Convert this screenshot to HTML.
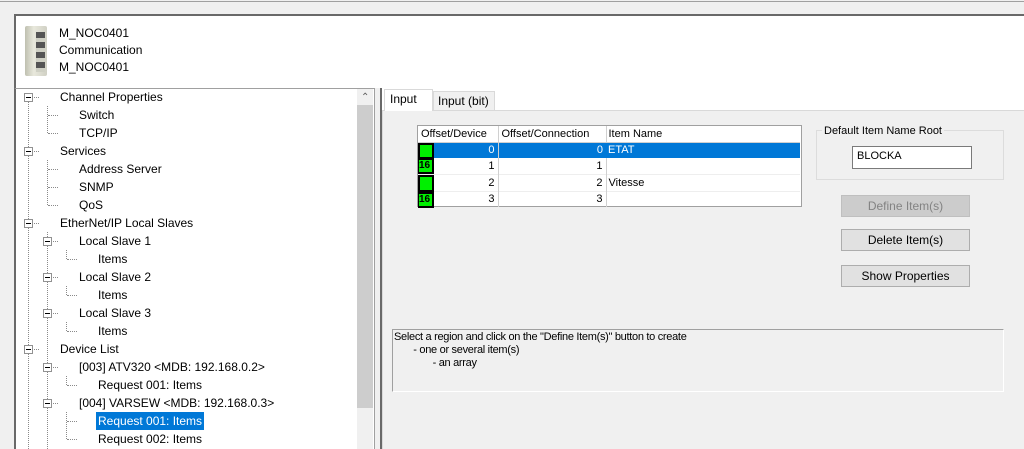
<!DOCTYPE html>
<html><head><style>
*{margin:0;padding:0;box-sizing:border-box}
body{width:1024px;height:449px;overflow:hidden;background:#f0f0f0;font-family:"Liberation Sans",sans-serif;font-size:12px;color:#000;position:relative}
.a{position:absolute}
.t{position:absolute;white-space:nowrap;line-height:18px;font-size:12px}
.box{position:absolute;width:9px;height:9px;border:1px solid #919191;background:#fff}
.box:after{content:"";position:absolute;left:1px;top:3px;width:5px;height:1px;background:#000}
.vd{position:absolute;width:1px;border-left:1px dotted #8a8a8a}
.hd{position:absolute;height:1px;border-top:1px dotted #8a8a8a}
table{border-collapse:collapse}
.btn{position:absolute;width:129px;height:22px;background:#e1e1e1;border:1px solid #adadad;text-align:center;line-height:20px;font-size:12px}
</style></head><body>
<div class="a" style="left:0;top:1px;width:1024px;height:1px;background:#a0a0a0"></div>
<div class="a" style="left:14px;top:14px;width:1010px;height:74px;background:#fff;border-top:2px solid #696969;border-left:2px solid #696969"></div>
<!-- module icon -->
<div class="a" style="left:25px;top:26px;width:22px;height:50px;background:linear-gradient(90deg,#bfc0b0,#e8e8dc 40%,#d0d0c4);border-radius:2px"></div>
<div class="a" style="left:36px;top:32px;width:9px;height:40px;background:repeating-linear-gradient(#555 0 6px,#cfd0c4 6px 10px)"></div>
<div class="t" style="left:59px;top:24px">M_NOC0401</div>
<div class="t" style="left:59px;top:41px">Communication</div>
<div class="t" style="left:59px;top:58px">M_NOC0401</div>
<!-- tree panel -->
<div class="a" style="left:14px;top:88px;width:361px;height:361px;background:#fff;border-left:2px solid #696969;border-top:1px solid #a0a0a0;border-right:1px solid #a0a0a0"></div>
<div class="a" style="left:357px;top:89px;width:16px;height:360px;background:#f0f0f0"></div>
<div class="a" style="left:357px;top:105px;width:16px;height:303px;background:#cdcdcd"></div>
<div class="a" style="left:361px;top:92px;font-size:10px;color:#606060">&#8963;</div>
<div class="a" style="left:380px;top:88px;width:2px;height:361px;background:#696969"></div>

<div class="vd" style="left:28px;top:102px;height:347px"></div>
<div class="vd" style="left:47px;top:106px;height:27px"></div>
<div class="vd" style="left:47px;top:160px;height:45px"></div>
<div class="vd" style="left:47px;top:232px;height:217px"></div>
<div class="vd" style="left:66px;top:250px;height:9px"></div>
<div class="vd" style="left:66px;top:286px;height:9px"></div>
<div class="vd" style="left:66px;top:322px;height:9px"></div>
<div class="vd" style="left:66px;top:376px;height:9px"></div>
<div class="vd" style="left:66px;top:412px;height:27px"></div>

<div class="box" style="left:24px;top:93px"></div><div class="hd" style="left:34px;top:97px;width:5px"></div>
<div class="t" style="left:60px;top:88px">Channel Properties</div>
<div class="hd" style="left:48px;top:115px;width:10px"></div><div class="t" style="left:79px;top:106px">Switch</div>
<div class="hd" style="left:48px;top:133px;width:10px"></div><div class="t" style="left:79px;top:124px">TCP/IP</div>
<div class="box" style="left:24px;top:147px"></div><div class="hd" style="left:34px;top:151px;width:5px"></div>
<div class="t" style="left:60px;top:142px">Services</div>
<div class="hd" style="left:48px;top:169px;width:10px"></div><div class="t" style="left:79px;top:160px">Address Server</div>
<div class="hd" style="left:48px;top:187px;width:10px"></div><div class="t" style="left:79px;top:178px">SNMP</div>
<div class="hd" style="left:48px;top:205px;width:10px"></div><div class="t" style="left:79px;top:196px">QoS</div>
<div class="box" style="left:24px;top:219px"></div><div class="hd" style="left:34px;top:223px;width:5px"></div>
<div class="t" style="left:60px;top:214px">EtherNet/IP Local Slaves</div>
<div class="box" style="left:43px;top:237px"></div><div class="hd" style="left:53px;top:241px;width:5px"></div><div class="t" style="left:79px;top:232px">Local Slave 1</div>
<div class="hd" style="left:67px;top:259px;width:10px"></div><div class="t" style="left:98px;top:250px">Items</div>
<div class="box" style="left:43px;top:273px"></div><div class="hd" style="left:53px;top:277px;width:5px"></div><div class="t" style="left:79px;top:268px">Local Slave 2</div>
<div class="hd" style="left:67px;top:295px;width:10px"></div><div class="t" style="left:98px;top:286px">Items</div>
<div class="box" style="left:43px;top:309px"></div><div class="hd" style="left:53px;top:313px;width:5px"></div><div class="t" style="left:79px;top:304px">Local Slave 3</div>
<div class="hd" style="left:67px;top:331px;width:10px"></div><div class="t" style="left:98px;top:322px">Items</div>
<div class="box" style="left:24px;top:345px"></div><div class="hd" style="left:34px;top:349px;width:5px"></div>
<div class="t" style="left:60px;top:340px">Device List</div>
<div class="box" style="left:43px;top:363px"></div><div class="hd" style="left:53px;top:367px;width:5px"></div><div class="t" style="left:79px;top:358px">[003] ATV320 &lt;MDB: 192.168.0.2&gt;</div>
<div class="hd" style="left:67px;top:385px;width:10px"></div><div class="t" style="left:98px;top:376px">Request 001: Items</div>
<div class="box" style="left:43px;top:399px"></div><div class="hd" style="left:53px;top:403px;width:5px"></div><div class="t" style="left:79px;top:394px">[004] VARSEW &lt;MDB: 192.168.0.3&gt;</div>
<div class="hd" style="left:67px;top:421px;width:10px"></div><div class="t" style="left:96px;top:412px;background:#0078d7;color:#fff;padding:0 2px">Request 001: Items</div>
<div class="hd" style="left:67px;top:439px;width:10px"></div><div class="t" style="left:98px;top:430px">Request 002: Items</div>

<!-- right panel -->
<div class="a" style="left:382px;top:88px;width:642px;height:361px;background:#fff"></div>
<div class="a" style="left:382px;top:110px;width:642px;height:339px;background:#f0f0f0;border-top:1px solid #d9d9d9;border-left:1px solid #d9d9d9"></div>
<div class="a" style="left:384px;top:89px;width:49px;height:22px;background:#fff;border:1px solid #d9d9d9;border-bottom:none"></div>
<div class="t" style="left:390px;top:90px">Input</div>
<div class="a" style="left:433px;top:91px;width:62px;height:19px;background:#f0f0f0;border:1px solid #d9d9d9;border-bottom:none"></div>
<div class="t" style="left:438px;top:92px">Input (bit)</div>

<div class="a" style="left:417px;top:125px;width:385px;height:82px;background:#fff;border:1px solid #a0a0a0"></div>
<table class="a" style="left:418px;top:126px;font-size:11px">
<tr style="height:16px;background:#fff"><td style="width:80px;border-right:1px solid #d0d0d0;border-bottom:1px solid #d0d0d0;padding-left:3px">Offset/Device</td><td style="width:108px;border-right:1px solid #d0d0d0;border-bottom:1px solid #d0d0d0;padding-left:3px">Offset/Connection</td><td style="width:194px;border-bottom:1px solid #d0d0d0;padding-left:2px">Item Name</td></tr>
<tr style="height:16px;background:#0078d7;color:#fff"><td style="position:relative;text-align:right;padding-right:3px;border-right:1px solid #d0d0d0"><span style="position:absolute;left:0;top:0;width:16px;height:16px;background:#00f000;border:2px solid #000"></span>0</td><td style="text-align:right;padding-right:3px">0</td><td style="padding-left:2px">ETAT</td></tr>
<tr style="height:16px;border-bottom:1px solid #eee"><td style="position:relative;text-align:right;padding-right:3px;border-right:1px solid #d0d0d0"><span style="position:absolute;left:0;top:0;width:16px;height:16px;background:#00f000;border:2px solid #000;border-left-width:1px;font-size:10px;font-weight:bold;line-height:12px;color:#000;text-align:left">16</span>1</td><td style="text-align:right;padding-right:3px;border-right:1px solid #d0d0d0">1</td><td></td></tr>
<tr style="height:17px;border-bottom:1px solid #eee"><td style="position:relative;text-align:right;padding-right:3px;border-right:1px solid #d0d0d0"><span style="position:absolute;left:0;top:0;width:16px;height:17px;background:#00f000;border:2px solid #000"></span>2</td><td style="text-align:right;padding-right:3px;border-right:1px solid #d0d0d0">2</td><td style="padding-left:2px">Vitesse</td></tr>
<tr style="height:16px"><td style="position:relative;text-align:right;padding-right:3px;border-right:1px solid #d0d0d0"><span style="position:absolute;left:0;top:0;width:16px;height:16px;background:#00f000;border:2px solid #000;border-left-width:1px;font-size:10px;font-weight:bold;line-height:12px;color:#000;text-align:left">16</span>3</td><td style="text-align:right;padding-right:3px;border-right:1px solid #d0d0d0">3</td><td></td></tr>
</table>

<div class="a" style="left:816px;top:130px;width:188px;height:50px;border:1px solid #dcdcdc"></div>
<div class="t" style="left:822px;top:122px;background:#f0f0f0;padding:0 2px;font-size:11px">Default Item Name Root</div>
<div class="a" style="left:852px;top:146px;width:120px;height:23px;background:#fff;border:1px solid #7a7a7a"></div>
<div class="t" style="left:857px;top:147px;font-size:11px">BLOCKA</div>
<div class="btn" style="left:841px;top:195px;background:#cccccc;border-color:#bfbfbf;color:#838383">Define Item(s)</div>
<div class="btn" style="left:841px;top:229px">Delete Item(s)</div>
<div class="btn" style="left:841px;top:265px">Show Properties</div>

<div class="a" style="left:392px;top:329px;width:612px;height:63px;border-top:1px solid #a0a0a0;border-left:1px solid #a0a0a0;border-right:1px solid #fff;border-bottom:1px solid #fff"></div>
<div class="a" style="left:394px;top:331px;font-size:11px;line-height:13px;letter-spacing:-0.3px;white-space:pre">Select a region and click on the "Define Item(s)" button to create
       - one or several item(s)
              - an array</div>
</body></html>
